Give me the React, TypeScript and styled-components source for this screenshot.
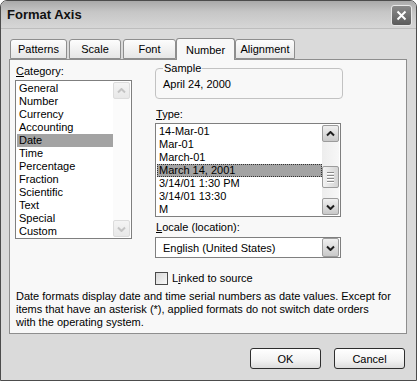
import React from 'react';
import styled, { createGlobalStyle } from 'styled-components';

const GlobalStyle = createGlobalStyle`
  html, body {
    margin: 0;
    padding: 0;
    background: #ffffff;
  }
  body {
    font-family: 'Liberation Sans', Arial, sans-serif;
    font-size: 11px;
    color: #000;
  }
`;

const categories = [
  'General', 'Number', 'Currency', 'Accounting', 'Date', 'Time',
  'Percentage', 'Fraction', 'Scientific', 'Text', 'Special', 'Custom',
];

const types = [
  '14-Mar-01', 'Mar-01', 'March-01', 'March 14, 2001',
  '3/14/01 1:30 PM', '3/14/01 13:30', 'M',
];

const Window = styled.div`
  width: 417px;
  height: 381px;
  box-sizing: border-box;
  border: 1px solid #4c4c4c;
  border-radius: 7px 7px 0 0;
  background: #dadada;
  display: flex;
  flex-direction: column;
  overflow: hidden;
`;

const TitleBar = styled.div`
  height: 27px;
  flex-shrink: 0;
  display: flex;
  align-items: center;
  justify-content: space-between;
  padding: 0 4px 0 6px;
  background: linear-gradient(to bottom, #a9a9a9 0%, #c6c6c6 40%, #d6d6d6 100%);
  border-bottom: 1px solid #bdbdbd;
`;

const Title = styled.span`
  font-weight: bold;
  font-size: 13px;
  color: #111;
`;

const CloseButton = styled.div`
  width: 19px;
  height: 19px;
  border: 1px solid #e8e8e8;
  border-radius: 3px;
  background: linear-gradient(to bottom, #8a8a8a, #5c5c5c);
  display: flex;
  align-items: center;
  justify-content: center;
  margin-top: 1px;
`;

const Body = styled.div`
  flex: 1;
  display: flex;
  flex-direction: column;
  padding: 8px 9px 0 8px;
`;

const TabStrip = styled.div`
  height: 22px;
  display: flex;
  align-items: flex-end;
  padding-left: 1px;
`;

const Tab = styled.div<{ $w: number; $active?: boolean; $gap?: number }>`
  width: ${({ $w }) => $w}px;
  height: ${({ $active }) => ($active ? 22 : 20)}px;
  margin-left: ${({ $gap }) => $gap ?? 0}px;
  box-sizing: border-box;
  border: 1px solid #8e8e8e;
  border-bottom: ${({ $active }) => ($active ? 'none' : '1px solid #8e8e8e')};
  border-radius: 3px 3px 0 0;
  background: ${({ $active }) =>
    $active ? '#f8f8f8' : 'linear-gradient(to bottom, #fdfdfd, #e6e6e6)'};
  display: flex;
  align-items: center;
  justify-content: center;
  position: relative;
  z-index: ${({ $active }) => ($active ? 1 : 0)};
  margin-bottom: ${({ $active }) => ($active ? -1 : 0)}px;
`;

const Panel = styled.div`
  height: 275px;
  box-sizing: border-box;
  border: 1px solid #8e8e8e;
  background: #f8f8f8;
  padding: 2px 0 0 5px;
  display: grid;
  grid-template-columns: 117px 188px;
  column-gap: 23px;
  align-content: start;
`;

const Column = styled.div`
  display: flex;
  flex-direction: column;
`;

const Label = styled.div<{ $top?: number }>`
  line-height: 13px;
  height: 13px;
  margin-top: ${({ $top }) => $top ?? 0}px;
  padding-left: 1px;
  white-space: nowrap;
`;

const ListBox = styled.div<{ $w: number; $h: number; $top?: number }>`
  width: ${({ $w }) => $w}px;
  height: ${({ $h }) => $h}px;
  margin-top: ${({ $top }) => $top ?? 0}px;
  box-sizing: border-box;
  border: 1px solid #7f7f7f;
  background: #fff;
  display: flex;
  padding: 1px 0 0 1px;
`;

const Items = styled.div`
  flex: 1;
  display: flex;
  flex-direction: column;
`;

const Item = styled.div<{ $selected?: boolean; $focus?: boolean }>`
  height: 13px;
  line-height: 13px;
  padding-left: 2px;
  box-sizing: border-box;
  white-space: nowrap;
  background: ${({ $selected }) => ($selected ? '#a3a3a3' : 'transparent')};
  outline: ${({ $focus }) => ($focus ? '1px dotted #333' : 'none')};
  outline-offset: -1px;
`;

const ScrollBar = styled.div<{ $disabled?: boolean }>`
  width: 17px;
  display: flex;
  flex-direction: column;
  justify-content: space-between;
  background: ${({ $disabled }) =>
    $disabled ? '#fbfbfb' : 'linear-gradient(to right, #ededed, #f7f7f7)'};
  margin-bottom: 1px;
  margin-right: 1px;
`;

const ScrollButton = styled.div<{ $disabled?: boolean }>`
  width: 17px;
  height: 17px;
  box-sizing: border-box;
  border: 1px solid ${({ $disabled }) => ($disabled ? '#dcdcdc' : '#9c9c9c')};
  border-radius: 2px;
  background: ${({ $disabled }) =>
    $disabled
      ? 'linear-gradient(to bottom, #f4f4f4, #e8e8e8)'
      : 'linear-gradient(to bottom, #f0f0f0, #c9c9c9)'};
  display: flex;
  align-items: center;
  justify-content: center;
`;

const Thumb = styled.div`
  width: 17px;
  height: 22px;
  box-sizing: border-box;
  border: 1px solid #9c9c9c;
  border-radius: 2px;
  background: linear-gradient(to right, #f2f2f2, #d4d4d4);
  display: flex;
  flex-direction: column;
  align-items: center;
  justify-content: center;
  gap: 1px;
  margin-top: 24px;
  margin-bottom: auto;
`;

const Grip = styled.div`
  width: 7px;
  height: 1px;
  background: #8a8a8a;
  box-shadow: 0 1px 0 #fff;
  margin-bottom: 1px;
`;

const SampleBox = styled.fieldset`
  margin: 0;
  width: 188px;
  height: 37px;
  box-sizing: border-box;
  border: 1px solid #c2c2c2;
  border-radius: 4px;
  padding: 4px 0 0 7px;
  min-inline-size: 0;
`;

const Legend = styled.legend`
  padding: 0 1px;
  margin-left: 0;
  line-height: 12px;
`;

const SampleText = styled.div`
  line-height: 13px;
`;

const Dropdown = styled.div`
  width: 186px;
  height: 21px;
  margin-top: 3px;
  box-sizing: border-box;
  border: 1px solid #7f7f7f;
  background: #fff;
  display: flex;
  align-items: center;
  justify-content: space-between;
  padding: 0 1px 0 7px;
`;

const DropButton = styled(ScrollButton)`
  height: 19px;
`;

const CheckRow = styled.div`
  display: flex;
  align-items: center;
  gap: 4px;
  margin-top: 13px;
  height: 14px;
`;

const CheckBox = styled.div`
  width: 13px;
  height: 13px;
  box-sizing: border-box;
  border: 1px solid #4a4a4a;
  background: linear-gradient(135deg, #d8d8d8, #f8f8f8);
`;

const Description = styled.div`
  grid-column: 1 / -1;
  width: 390px;
  margin-top: 5px;
  line-height: 13px;
  padding-left: 1px;
  white-space: nowrap;
`;

const ButtonRow = styled.div`
  display: flex;
  justify-content: flex-end;
  gap: 13px;
  margin-top: 14px;
  padding-right: 2px;
`;

const Button = styled.div`
  width: 71px;
  height: 21px;
  box-sizing: border-box;
  border: 1px solid #2e2e2e;
  border-radius: 3px;
  background: linear-gradient(to bottom, #ffffff 0%, #f2f2f2 60%, #dcdcdc 100%);
  display: flex;
  align-items: center;
  justify-content: center;
`;

const Chevron: React.FC<{ down?: boolean; light?: boolean }> = ({ down, light }) => (
  <svg width="9" height="6" viewBox="0 0 9 6">
    <path
      d={down ? 'M1 1.5 L4.5 5 L8 1.5' : 'M1 4.5 L4.5 1 L8 4.5'}
      fill="none"
      stroke={light ? '#c4c4c4' : '#1e1e1e'}
      strokeWidth="2"
    />
  </svg>
);

const App: React.FC = () => {
  return (
    <>
      <GlobalStyle />
      <Window>
        <TitleBar>
          <Title>Format Axis</Title>
          <CloseButton>
            <svg width="11" height="11" viewBox="0 0 11 11">
              <path d="M1.5 1.5 L9.5 9.5 M9.5 1.5 L1.5 9.5" stroke="#fff" strokeWidth="2" />
            </svg>
          </CloseButton>
        </TitleBar>
        <Body>
          <TabStrip>
            <Tab $w={57}>Patterns</Tab>
            <Tab $w={52} $gap={2}>Scale</Tab>
            <Tab $w={53} $gap={2}>Font</Tab>
            <Tab $w={59} $active>Number</Tab>
            <Tab $w={60}>Alignment</Tab>
          </TabStrip>
          <Panel>
            <Column>
              <Label $top={3}>
                <u>C</u>ategory:
              </Label>
              <ListBox $w={117} $h={159} $top={2}>
                <Items>
                  {categories.map((c) => (
                    <Item key={c} $selected={c === 'Date'}>
                      {c}
                    </Item>
                  ))}
                </Items>
                <ScrollBar $disabled>
                  <ScrollButton $disabled>
                    <Chevron light />
                  </ScrollButton>
                  <ScrollButton $disabled>
                    <Chevron down light />
                  </ScrollButton>
                </ScrollBar>
              </ListBox>
            </Column>
            <Column>
              <SampleBox>
                <Legend>Sample</Legend>
                <SampleText>April 24, 2000</SampleText>
              </SampleBox>
              <Label $top={9}>
                <u>T</u>ype:
              </Label>
              <ListBox $w={186} $h={94} $top={2}>
                <Items>
                  {types.map((t) => (
                    <Item key={t} $selected={t === 'March 14, 2001'} $focus={t === 'March 14, 2001'}>
                      {t}
                    </Item>
                  ))}
                </Items>
                <ScrollBar>
                  <ScrollButton>
                    <Chevron />
                  </ScrollButton>
                  <Thumb>
                    <Grip />
                    <Grip />
                    <Grip />
                    <Grip />
                  </Thumb>
                  <ScrollButton>
                    <Chevron down />
                  </ScrollButton>
                </ScrollBar>
              </ListBox>
              <Label $top={4}>
                <u>L</u>ocale (location):
              </Label>
              <Dropdown>
                <span>English (United States)</span>
                <DropButton>
                  <Chevron down />
                </DropButton>
              </Dropdown>
              <CheckRow>
                <CheckBox />
                <span>
                  L<u>i</u>nked to source
                </span>
              </CheckRow>
            </Column>
            <Description>
              Date formats display date and time serial numbers as date values. Except for
              <br />
              items that have an asterisk (*), applied formats do not switch date orders
              <br />
              with the operating system.
            </Description>
          </Panel>
          <ButtonRow>
            <Button>OK</Button>
            <Button>Cancel</Button>
          </ButtonRow>
        </Body>
      </Window>
    </>
  );
};

export default App;
